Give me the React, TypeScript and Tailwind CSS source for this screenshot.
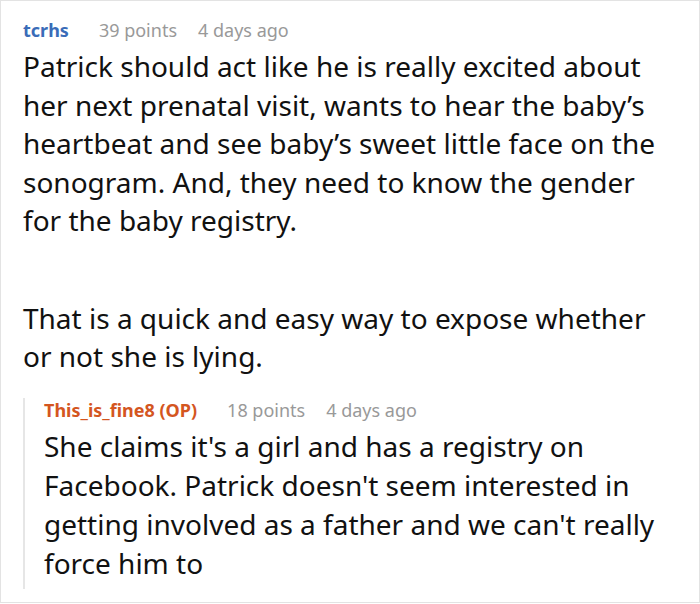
const font = { fontFamily: '"Noto Sans", "Open Sans", sans-serif' }

function Meta({ name, color, points, time }: { name: string; color: string; points: string; time: string }) {
  return (
    <div className="flex items-baseline text-[18px] leading-[24px]">
      <span className={`font-bold ${color}`}>{name}</span>
      <span className="ml-[30px] text-[#999999]">{points}</span>
      <span className="ml-[21px] text-[#999999]">{time}</span>
    </div>
  )
}

export default function App() {
  return (
    <div className="w-[700px] h-[603px] bg-white border border-[#e3e3e3] overflow-hidden" style={font}>
      <div className="pl-[22px] pr-[20px] pt-[17px]">
        <Meta name="tcrhs" color="text-[#3a6cb8]" points="39 points" time="4 days ago" />
        <div className="mt-[5px] text-[28px] leading-[38.5px] text-[#111111]">
          <p>
            Patrick should act like he is really excited about her next prenatal visit, wants to hear the baby’s
            heartbeat and see baby’s sweet little face on the sonogram. And, they need to know the gender for the
            baby registry.
          </p>
          <p className="mt-[59px]">That is a quick and easy way to expose whether or not she is lying.</p>
        </div>
        <div className="mt-[34px] border-l-2 border-[#e6e6e6] pl-[19px] pb-[6px]">
          <div className="-mt-[12px]">
            <Meta name="This_is_fine8 (OP)" color="text-[#d4561f]" points="18 points" time="4 days ago" />
          </div>
          <p className="mt-[5px] text-[28px] leading-[39px] text-[#111111]">
            She claims it's a girl and has a registry on Facebook. Patrick doesn't seem interested in getting
            involved as a father and we can't really force him to
          </p>
        </div>
      </div>
    </div>
  )
}
